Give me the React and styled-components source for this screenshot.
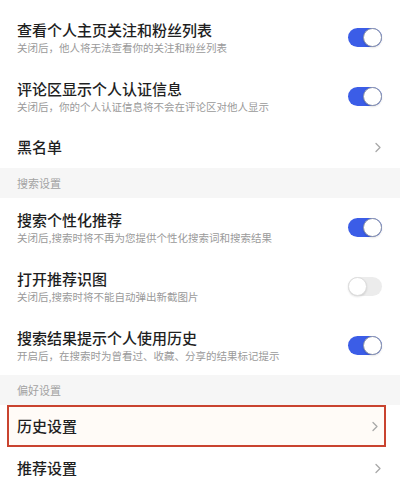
import styled, { createGlobalStyle } from 'styled-components';

const GlobalStyle = createGlobalStyle`
    html, body {
        margin: 0;
        padding: 0;
        background: #ffffff;
    }
    body {
        font-family: "Noto Sans CJK SC", "Noto Sans", sans-serif;
        -webkit-font-smoothing: antialiased;
    }
`;

const Page = styled.div`
    width: 400px;
    padding-top: 8px;
    display: flex;
    flex-direction: column;
`;

const Row = styled.div`
    height: ${(p) => (p.$tall ? 59 : 42)}px;
    padding: 0 18px 0 17px;
    display: flex;
    align-items: center;
    justify-content: space-between;
    box-sizing: border-box;
`;

const HighlightRow = styled(Row)`
    margin-left: 7px;
    width: 379px;
    padding: 0 5px 0 8px;
    border: 2px solid #c9432f;
    background: #fffbf7;
`;

const TextBlock = styled.div`
    display: flex;
    flex-direction: column;
`;

const Title = styled.div`
    font-size: 15px;
    line-height: 20px;
    font-weight: 500;
    color: #1f1f1f;
`;

const Subtitle = styled.div`
    font-size: 10.5px;
    line-height: 16px;
    color: #9a9a9a;
`;

const SectionHeader = styled.div`
    height: 30px;
    padding-left: 17px;
    display: flex;
    align-items: center;
    background: #f6f6f6;
    font-size: 11px;
    color: #a3a3a3;
`;

const Track = styled.div`
    width: 34px;
    height: 19px;
    border-radius: 10px;
    background: ${(p) => (p.$on ? '#3b5de7' : '#ececec')};
    display: flex;
    justify-content: ${(p) => (p.$on ? 'flex-end' : 'flex-start')};
    align-items: center;
    flex-shrink: 0;
`;

const Knob = styled.div`
    width: 17px;
    height: 17px;
    border-radius: 50%;
    background: #ffffff;
    border: 1px solid ${(p) => (p.$on ? '#8f97aa' : '#dddddd')};
    box-shadow: 0 1px 2px rgba(0, 0, 0, 0.12);
`;

const Toggle = ({ on }) => (
    <Track $on={on}>
        <Knob $on={on} />
    </Track>
);

const Chevron = () => (
    <svg width="8" height="11" viewBox="0 0 8 11">
        <path d="M2 1.5 L6 5.5 L2 9.5" fill="none" stroke="#a8a8a8" strokeWidth="1.3" strokeLinecap="round" strokeLinejoin="round" />
    </svg>
);

const ToggleItem = ({ title, subtitle, on }) => (
    <Row $tall>
        <TextBlock>
            <Title>{title}</Title>
            <Subtitle>{subtitle}</Subtitle>
        </TextBlock>
        <Toggle on={on} />
    </Row>
);

const App = () => {
    return (
        <Page>
            <GlobalStyle />
            <ToggleItem title="查看个人主页关注和粉丝列表" subtitle="关闭后，他人将无法查看你的关注和粉丝列表" on />
            <ToggleItem title="评论区显示个人认证信息" subtitle="关闭后，你的个人认证信息将不会在评论区对他人显示" on />
            <Row>
                <Title>黑名单</Title>
                <Chevron />
            </Row>
            <SectionHeader>搜索设置</SectionHeader>
            <ToggleItem title="搜索个性化推荐" subtitle="关闭后,搜索时将不再为您提供个性化搜索词和搜索结果" on />
            <ToggleItem title="打开推荐识图" subtitle="关闭后,搜索时将不能自动弹出新截图片" on={false} />
            <ToggleItem title="搜索结果提示个人使用历史" subtitle="开启后，在搜索时为曾看过、收藏、分享的结果标记提示" on />
            <SectionHeader>偏好设置</SectionHeader>
            <HighlightRow>
                <Title>历史设置</Title>
                <Chevron />
            </HighlightRow>
            <Row>
                <Title>推荐设置</Title>
                <Chevron />
            </Row>
        </Page>
    );
};

export default App;
